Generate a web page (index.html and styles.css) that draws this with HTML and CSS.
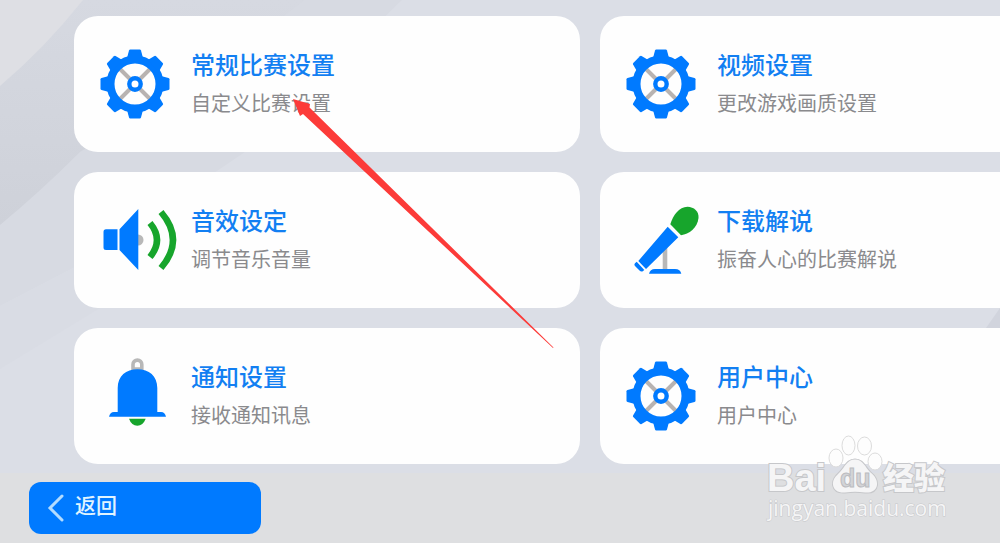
FILE: index.html
```html
<!DOCTYPE html>
<html lang="zh-CN">
<head>
    <meta charset="UTF-8">
    <meta name="viewport" content="width=device-width, initial-scale=1.0">
    <title>设置</title>
    <link rel="stylesheet" href="styles.css">
</head>
<body>
    <svg class="backdrop" viewBox="0 0 1000 473" preserveAspectRatio="xMinYMin slice" aria-hidden="true">
        <defs>
            <linearGradient id="shade" x1="0" y1="0" x2="0" y2="1">
                <stop offset="0" stop-color="#d6d9e1"/>
                <stop offset="1" stop-color="#ced1d9"/>
            </linearGradient>
        </defs>
        <path fill="#d7dae2" d="M0 0H402L245 152L75 267L0 306Z"/>
        <path fill="#d9dce4" d="M0 306L75 267L100 308L0 369Z"/>
        <path fill="url(#shade)" d="M0 0H305Q210 75 80 152Q40 192 0 225Z"/>
        <path fill="#dedfe4" d="M0 0H83Q45 48 0 86Z"/>
        <path fill="#d1d4dd" d="M1000 308V328H986Z"/>
    </svg>

    <!-- 齿轮图标共用 -->
    <svg class="sprite" aria-hidden="true">
        <symbol id="gear" viewBox="0 0 93 80">
            <path stroke="#b8b3b1" stroke-width="4" d="M21 24L53 56M53 24L21 56"/>
            <circle cx="37" cy="40" r="24.500" fill="none" stroke="#007aff" stroke-width="8"/>
            <g fill="#007aff">
                <path id="tooth" d="M29 14L31 6.500Q31.300 5.500 32.300 5.500H41.700Q42.700 5.500 43 6.500L45 14Z"/>
                <use href="#tooth" transform="rotate(45 37 40)"/>
                <use href="#tooth" transform="rotate(90 37 40)"/>
                <use href="#tooth" transform="rotate(135 37 40)"/>
                <use href="#tooth" transform="rotate(180 37 40)"/>
                <use href="#tooth" transform="rotate(225 37 40)"/>
                <use href="#tooth" transform="rotate(270 37 40)"/>
                <use href="#tooth" transform="rotate(315 37 40)"/>
            </g>
            <circle cx="37" cy="40" r="5.700" fill="#fff" stroke="#007aff" stroke-width="4.400"/>
        </symbol>
    </svg>

    <main class="settings">
        <a class="card" href="#match">
            <svg class="icon" aria-hidden="true"><use href="#gear"/></svg>
            <div class="text">
                <h2>常规比赛设置</h2>
                <p>自定义比赛设置</p>
            </div>
        </a>
        <a class="card" href="#video">
            <svg class="icon" aria-hidden="true"><use href="#gear"/></svg>
            <div class="text">
                <h2>视频设置</h2>
                <p>更改游戏画质设置</p>
            </div>
        </a>
        <a class="card" href="#sound">
            <svg class="icon" viewBox="0 0 93 80" aria-hidden="true">
                <circle cx="40" cy="40" r="5.500" fill="#b8b8b8"/>
                <path fill="#007aff" d="M8 29.300H19.500V50H8Q5.500 50 5.500 47.500V32Q5.500 29.300 8 29.300ZM21.500 29.300L40.300 9V70L21.500 50Z"/>
                <path fill="none" stroke="#17a52c" stroke-width="6.500" d="M52 23Q66 40 52 57M63 12Q87 40 63 68"/>
            </svg>
            <div class="text">
                <h2>音效设定</h2>
                <p>调节音乐音量</p>
            </div>
        </a>
        <a class="card" href="#commentary">
            <svg class="icon" viewBox="16 0 93 80" aria-hidden="true">
                <path fill="#b8b8b8" d="M54.700 46H59.300V69H54.700Z"/>
                <path fill="#17a52c" d="M62.300 24.300C65 15 71 7 79.500 6.700C86 7 91 11 90.500 18C89.500 28 81 34 73 35.300Z"/>
                <path fill="#007aff" d="M59.700 26.700L70.300 37.300L38 69L30.300 61ZM28.700 61.700L36.300 70L34.800 71.200Q33 72 31.500 70.500L27 66Q25.800 64.500 27 63.200ZM41 73.700Q42 69 47 69H67Q72.500 69 73.300 73.700Z"/>
            </svg>
            <div class="text">
                <h2>下载解说</h2>
                <p>振奋人心的比赛解说</p>
            </div>
        </a>
        <a class="card" href="#notice">
            <svg class="icon" viewBox="0 0 93 80" aria-hidden="true">
                <path fill="none" stroke="#b8b8b8" stroke-width="3.600" d="M35 16V8.500A4.400 4.400 0 0 1 43.800 8.500V16M35 13H43.800"/>
                <path fill="#007aff" d="M19.700 56V32C19.700 20 28 13.300 39.500 13.300S59.300 20 59.300 32V56H63Q67 56 68 60.700H11Q12 56 16 56Z"/>
                <path fill="#17a52c" d="M31 62.700H47.700Q45 69.700 39.300 69.700T31 62.700Z"/>
            </svg>
            <div class="text">
                <h2>通知设置</h2>
                <p>接收通知讯息</p>
            </div>
        </a>
        <a class="card" href="#user">
            <svg class="icon" aria-hidden="true"><use href="#gear"/></svg>
            <div class="text">
                <h2>用户中心</h2>
                <p>用户中心</p>
            </div>
        </a>
    </main>

    <footer class="footer">
        <button class="back-btn" type="button">
            <svg class="chevron" viewBox="0 0 18 30" aria-hidden="true"><path d="M15 3L3 15L15 27"/></svg>
            <span>返回</span>
        </button>
    </footer>

    <svg class="arrow" viewBox="0 0 262 250" aria-hidden="true">
        <path fill="#fc3b39" d="M0 0L17 5L16.500 8.500L260.500 248.500L260 249L10 15L7 17Z"/>
    </svg>

    <svg class="watermark" viewBox="0 0 190 96" role="img" aria-label="Baidu 经验">
        <g class="paw">
            <ellipse cx="72" cy="26" rx="7" ry="9"/>
            <ellipse cx="84.500" cy="13.500" rx="6.500" ry="9.500"/>
            <ellipse cx="100.500" cy="14" rx="7" ry="9"/>
            <ellipse cx="111" cy="29.500" rx="7" ry="8.500"/>
        </g>
        <g class="mark">
            <path d="M91 27.500C99 27.500 101 35 106 40C111 44 113.500 48 113 53C112 59 107 61 101 60.500C94 59.500 88 59.500 81 60.500C74 61 70 58 69 53C68.500 47 72 44 76 40C81 35 83 27.500 91 27.500Z"/>
            <text class="latin" x="3" y="59">Bai</text>
            <text class="hanzi" x="119" y="57">经验</text>
            <text class="url" x="4" y="84">jingyan.baidu.com</text>
        </g>
        <text class="du" x="76" y="55">du</text>
    </svg>
</body>
</html>
```
FILE: styles.css
```css
* {
    margin: 0;
    padding: 0;
    box-sizing: border-box;
}

body {
    position: relative;
    min-height: 100vh;
    display: flex;
    flex-direction: column;
    overflow: hidden;
    font-family: "Noto Sans CJK SC", sans-serif;
    background: #dbdee6;
}

.backdrop {
    position: absolute;
    width: 100%;
    z-index: -1;
}

.sprite {
    position: absolute;
    width: 0;
    height: 0;
}

.settings {
    flex: 1;
    display: grid;
    grid-template-columns: 1fr 1fr;
    align-content: start;
    gap: 20px;
    padding: 16px 0 9px 74px;
    margin-right: -106px;
}

.card {
    display: flex;
    align-items: center;
    height: 136px;
    padding-left: 24px;
    border-radius: 24px;
    background: #fefefe;
    text-decoration: none;
}

.icon {
    width: 93px;
    height: 80px;
}

.text h2 {
    font-size: 24px;
    line-height: 36px;
    font-weight: 500;
    color: #127ff2;
}

.text p {
    padding-top: 2px;
    font-size: 20px;
    line-height: 38px;
    color: #8a8a8d;
}

.footer {
    padding: 9px 29px;
    background: #dedfe1;
}

.back-btn {
    display: flex;
    align-items: center;
    gap: 10px;
    width: 232px;
    height: 52px;
    padding-left: 18px;
    border: none;
    border-radius: 12px;
    background: #007aff;
    color: #e0f4ff;
    font-family: inherit;
    font-size: 21px;
    font-weight: 500;
    line-height: 30px;
}

.back-btn span {
    padding-bottom: 8px;
}

.chevron {
    width: 18px;
    height: 30px;
    fill: none;
    stroke: #b3dcff;
    stroke-width: 3;
    stroke-linecap: round;
}

.arrow {
    position: absolute;
    left: 293px;
    top: 99px;
    width: 262px;
}

.watermark {
    position: absolute;
    right: 46px;
    bottom: 15px;
    width: 190px;
}

.paw {
    fill: #fdfdfd;
    stroke: #dcdcdc;
}

.mark {
    fill: #f5f5f6;
    stroke: #c6c7ca;
    stroke-width: 2;
    paint-order: stroke;
}

.latin {
    font: bold 38px "Liberation Sans", sans-serif;
}

.hanzi {
    font: 900 31px "Noto Sans CJK SC", sans-serif;
}

.url {
    font: 21px "Open Sans", sans-serif;
    stroke-width: 1;
}

.du {
    font: bold 25px "Liberation Sans", sans-serif;
    fill: #d3d4d7;
    stroke: #bbbcc0;
    stroke-width: 1;
}
```
